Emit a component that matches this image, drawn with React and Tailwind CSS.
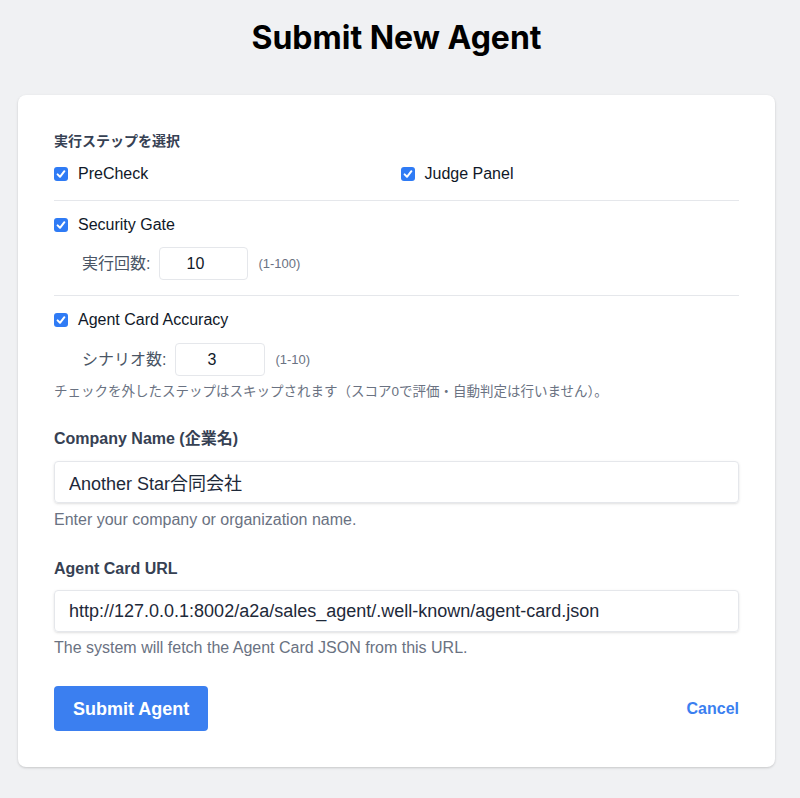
import { useState } from "react";

const FONT = { fontFamily: '"Liberation Sans", "Noto Sans CJK JP", sans-serif' };

/**
 * Checkbox drawn as a blue square with a white tick
 */
const Check = ({ checked, onChange }) => (
  <button
    type="button"
    onClick={onChange}
    className={`w-[14px] h-[14px] shrink-0 rounded-[3px] flex items-center justify-center ${
      checked ? "bg-[#2f7bf5]" : "bg-white border border-gray-400"
    }`}
  >
    {checked && (
      <svg viewBox="0 0 14 14" className="w-[14px] h-[14px]">
        <path d="M3.6 7.4 L6 9.8 L10.4 4.2" fill="none" stroke="white" strokeWidth="2" strokeLinecap="round" strokeLinejoin="round" />
      </svg>
    )}
  </button>
);

const StepRow = ({ label, checked, onToggle }) => (
  <label className="flex items-center gap-[10px] h-6 text-base text-gray-900">
    <Check checked={checked} onChange={onToggle} />
    <span>{label}</span>
  </label>
);

const CountInput = ({ label, value, range, inputWidth }) => (
  <div className="flex items-center ml-7 h-[33px]">
    <span className="text-base text-gray-600 mr-[9px]">{label}</span>
    <input
      defaultValue={value}
      className={`${inputWidth} h-[33px] rounded border border-gray-200 pr-[17px] text-center text-base text-gray-900 outline-none`}
      style={FONT}
    />
    <span className="ml-[10px] text-[13px] text-gray-500">{range}</span>
  </div>
);

export default function App() {
  const [steps, setSteps] = useState({
    precheck: true,
    judge: true,
    security: true,
    accuracy: true
  });
  const toggle = (key) => setSteps((s) => ({ ...s, [key]: !s[key] }));

  return (
    <div className="min-h-[798px] bg-[#f0f1f3] w-full" style={FONT}>
      <div className="w-[793px] px-[18px] pb-8">
        <h1
          className="h-[95px] pt-[18px] text-center text-[32px] font-bold text-black leading-[40px]"
          style={{ fontFamily: 'Inter, "Liberation Sans", sans-serif' }}
        >
          Submit New Agent
        </h1>

        <div className="bg-white rounded-lg shadow-[0_1px_3px_rgba(0,0,0,0.12),0_1px_2px_rgba(0,0,0,0.06)] px-9 pt-9 pb-9">
          {/* Step selection */}
          <div className="text-sm font-bold text-gray-700 leading-5 mb-[11px]">実行ステップを選択</div>
          <div className="grid grid-cols-2 gap-2 pb-[14px] border-b border-gray-200">
            <StepRow label="PreCheck" checked={steps.precheck} onToggle={() => toggle("precheck")} />
            <StepRow label="Judge Panel" checked={steps.judge} onToggle={() => toggle("judge")} />
          </div>

          <div className="pt-3 pb-[15px] border-b border-gray-200">
            <StepRow label="Security Gate" checked={steps.security} onToggle={() => toggle("security")} />
            <div className="mt-[10px]">
              <CountInput label="実行回数:" value="10" range="(1-100)" inputWidth="w-[89px]" />
            </div>
          </div>

          <div className="pt-3">
            <StepRow label="Agent Card Accuracy" checked={steps.accuracy} onToggle={() => toggle("accuracy")} />
            <div className="mt-[11px]">
              <CountInput label="シナリオ数:" value="3" range="(1-10)" inputWidth="w-[90px]" />
            </div>
            <p className="mt-2 text-[13.5px] leading-4 text-gray-500">
              チェックを外したステップはスキップされます（スコア0で評価・自動判定は行いません）。
            </p>
          </div>

          {/* Company name */}
          <div className="mt-[27px]">
            <label className="block text-base font-bold text-gray-700 leading-6">Company Name (企業名)</label>
            <input
              defaultValue="Another Star合同会社"
              className="mt-[10px] w-full h-[42px] rounded border border-gray-200 shadow-sm px-[14px] text-lg text-gray-800 outline-none"
              style={FONT}
            />
            <p className="mt-[5px] text-base leading-6 text-gray-500">Enter your company or organization name.</p>
          </div>

          {/* Agent card URL */}
          <div className="mt-[25px]">
            <label className="block text-base font-bold text-gray-700 leading-6">Agent Card URL</label>
            <input
              defaultValue="http://127.0.0.1:8002/a2a/sales_agent/.well-known/agent-card.json"
              className="mt-[9px] w-full h-[42px] rounded border border-gray-200 shadow-sm px-[14px] text-lg text-gray-800 outline-none"
              style={FONT}
            />
            <p className="mt-1 text-base leading-6 text-gray-500">The system will fetch the Agent Card JSON from this URL.</p>
          </div>

          {/* Actions */}
          <div className="mt-[26px] flex items-center justify-between">
            <button className="h-[45px] px-[19px] rounded bg-[#3b7ff0] text-white text-lg font-bold">
              Submit Agent
            </button>
            <button className="text-base font-bold text-[#3b7ff0]">Cancel</button>
          </div>
        </div>
      </div>
    </div>
  );
}
